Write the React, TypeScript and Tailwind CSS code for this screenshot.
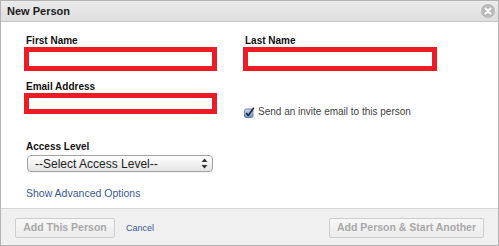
import React from "react";

function CloseIcon() {
  return (
    <svg width="14" height="14" viewBox="0 0 14 14">
      <circle cx="7" cy="7" r="7" fill="#b9b9b9" />
      <path d="M4.5 4.5 L9.5 9.5 M9.5 4.5 L4.5 9.5" stroke="#ffffff" strokeWidth="2" strokeLinecap="round" />
    </svg>
  );
}

function CheckIcon() {
  return (
    <svg width="11" height="11" viewBox="0 0 11 11">
      <defs>
        <linearGradient id="cbg" x1="0" y1="0" x2="0" y2="1">
          <stop offset="0" stopColor="#c9d8ee" />
          <stop offset="1" stopColor="#6f93c8" />
        </linearGradient>
      </defs>
      <rect x="0.5" y="2" width="8.5" height="8.5" rx="1.5" fill="url(#cbg)" stroke="#5a6f90" strokeWidth="0.8" />
      <path d="M2.2 6 L4.3 8.4 L9.8 0.8" fill="none" stroke="#1d2a44" strokeWidth="1.7" strokeLinejoin="round" />
    </svg>
  );
}

function SelectArrows() {
  return (
    <svg width="7" height="11" viewBox="0 0 7 11">
      <path d="M3.5 0.5 L6.5 4 L0.5 4 Z" fill="#333" />
      <path d="M3.5 10.5 L6.5 7 L0.5 7 Z" fill="#333" />
    </svg>
  );
}

export default function App() {
  return (
    <div className="w-[499px] h-[246px] border border-[#b3b3b3] flex flex-col font-['Liberation_Sans',Arial,sans-serif] bg-white overflow-hidden">
      <div className="h-[21px] shrink-0 border-b border-[#c6c6c6] bg-gradient-to-b from-[#ececec] to-[#dddddd] flex items-center justify-between pl-[6px] pr-[3px]">
        <span className="text-[11px] font-bold text-[#1c1c1c] leading-none">New Person</span>
        <CloseIcon />
      </div>

      <div className="h-[186px] shrink-0 bg-white pl-[23px] pt-[13px] flex flex-col">
        <div className="flex gap-[26px]">
          <div className="w-[193px] flex flex-col">
            <div className="text-[10px] leading-[12px] font-bold text-[#111] pl-[2px]">First Name</div>
            <div className="h-[24px] border-[5px] border-[#ed1c24] bg-white" />
          </div>
          <div className="w-[194px] flex flex-col">
            <div className="text-[10px] leading-[12px] font-bold text-[#111] pl-[2px]">Last Name</div>
            <div className="h-[24px] border-[5px] border-[#ed1c24] bg-white" />
          </div>
        </div>

        <div className="flex gap-[26px] mt-[10px]">
          <div className="w-[193px] flex flex-col">
            <div className="text-[10px] leading-[12px] font-bold text-[#111] pl-[2px]">Email Address</div>
            <div className="h-[21px] border-[5px] border-[#ed1c24] bg-white" />
          </div>
          <div className="w-[194px] flex items-center gap-[3px] pt-[25px] self-start pl-[1px]">
            <CheckIcon />
            <span className="text-[10px] leading-[12px] text-[#444]">Send an invite email to this person</span>
          </div>
        </div>

        <div className="flex flex-col mt-[23px]">
          <div className="text-[10px] leading-[12px] font-bold text-[#111] pl-[2px]">Access Level</div>
          <div className="mt-[2px] ml-[3px] w-[186px] h-[17px] rounded-[4px] border border-[#a3a3a3] bg-gradient-to-b from-[#ffffff] to-[#e4e4e4] flex items-center justify-between pl-[7px] pr-[4px] shadow-[0_1px_0_rgba(0,0,0,0.05)]">
            <span className="text-[12px] leading-none text-[#222]">--Select Access Level--</span>
            <SelectArrows />
          </div>
        </div>

        <div className="mt-[15px] pl-[2px] text-[10.5px] leading-[13px] text-[#3b5998]">Show Advanced Options</div>
      </div>

      <div className="flex-1 border-t border-[#d6d6d6] bg-[#f0f0f0] flex items-start justify-between pl-[14px] pr-[14px] pt-[9px]">
        <div className="flex items-center gap-[11px]">
          <div className="w-[100px] h-[20px] border border-[#cdcdcd] rounded-[2px] bg-gradient-to-b from-[#f7f7f7] to-[#ececec] flex items-center justify-center text-[10.5px] font-bold text-[#a9a9a9]">
            Add This Person
          </div>
          <span className="text-[9px] text-[#3b5998] leading-none">Cancel</span>
        </div>
        <div className="w-[155px] h-[20px] border border-[#cdcdcd] rounded-[2px] bg-gradient-to-b from-[#f7f7f7] to-[#ececec] flex items-center justify-center text-[10.5px] font-bold text-[#a9a9a9]">
          Add Person &amp; Start Another
        </div>
      </div>
    </div>
  );
}
